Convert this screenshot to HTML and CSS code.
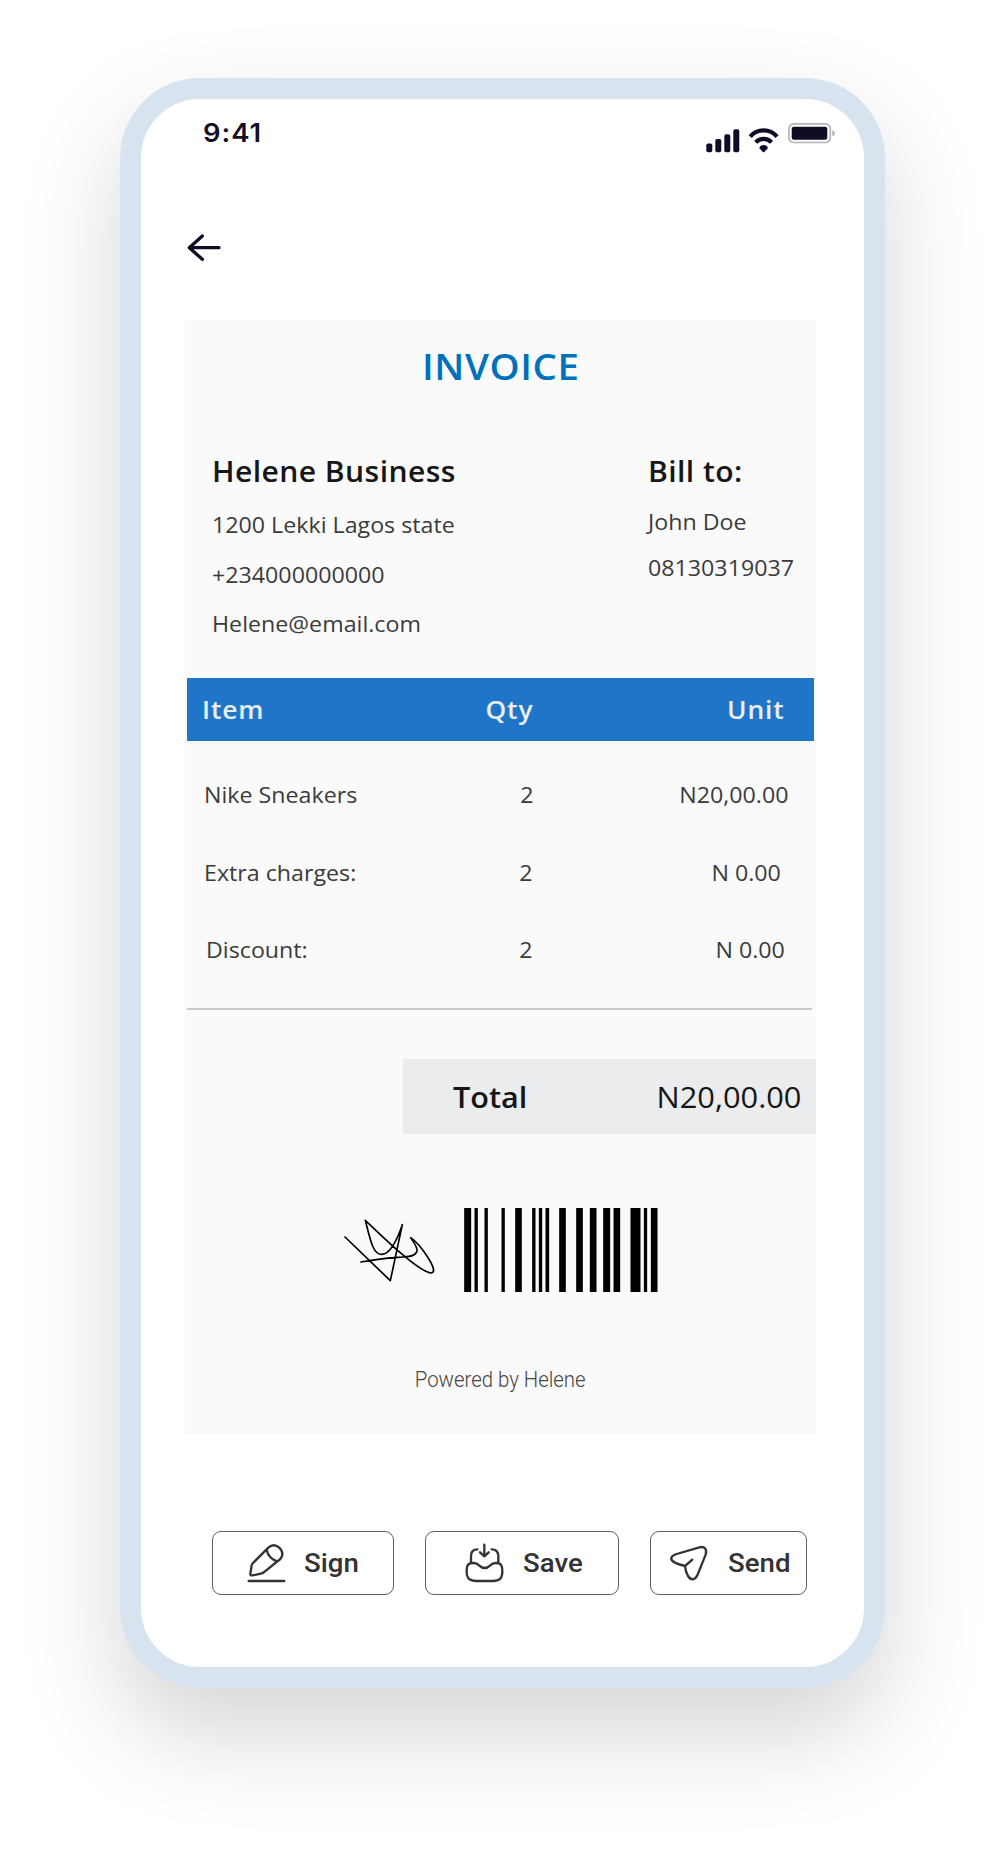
FILE: index.html
```html
<!DOCTYPE html>
<html lang="en">
<head>
<meta charset="utf-8">
<title>Invoice</title>
<link rel="stylesheet" href="styles.css">
</head>
<body>
<main class="phone">
  <header class="status">
    <span class="wide time">9:41</span>
    <div class="status-icons">
      <svg class="signal" width="34" height="24" viewBox="0 0 34 24"><rect x=".3" y="14.5" width="6" height="8.7" rx="1.8"/><rect x="9.3" y="10" width="6" height="13.2" rx="1.8"/><rect x="18.3" y="5.3" width="6" height="17.9" rx="1.8"/><rect x="27.3" y=".3" width="6" height="22.9" rx="1.8"/></svg>
      <svg class="wifi" width="32" height="25" viewBox="0 0 32 25"><path class="arc" d="M2.2 8.6A17.6 17.6 0 0 1 29 8.6M7.7 14.4A10.8 10.8 0 0 1 23.5 14.4"/><path d="M11.4 19.4C13.2 16.2 18 16.2 19.8 19.4Q20 20 19.5 20.5L16.3 23.9Q15.6 24.5 14.9 23.9L11.7 20.5Q11.2 20 11.4 19.4Z"/></svg>
      <svg class="battery" width="48" height="21" viewBox="0 0 48 21"><rect class="shell" x=".9" y=".9" width="41.4" height="18.6" rx="5"/><rect x="3.7" y="3.7" width="35.6" height="13" rx="2.2"/><path class="cap" d="M44.3 7.2Q46.8 7.8 46.8 10.2T44.3 13.2Z"/></svg>
    </div>
  </header>
  <nav class="nav">
    <svg class="back" width="34" height="30" viewBox="232 488 102 90"><path d="M328 532H239M278 497L239 532L278 567"/></svg>
  </nav>

  <section class="invoice">
    <h1 class="title"><span class="wide">INVOICE</span></h1>
    <div class="parties">
      <div class="seller">
        <h2><span class="wide">Helene Business</span></h2>
        <p><span class="wide">1200 Lekki Lagos state</span></p>
        <p><span class="wide">+234000000000</span></p>
        <p><span class="wide">Helene@email.com</span></p>
      </div>
      <div class="buyer">
        <h2><span class="wide">Bill to:</span></h2>
        <p><span class="wide">John Doe</span></p>
        <p><span class="wide">08130319037</span></p>
      </div>
    </div>
    <div class="row head"><span class="wide">Item</span><span class="wide end">Qty</span><span class="wide end">Unit</span></div>
    <div class="items">
      <div class="row product"><span class="wide">Nike Sneakers</span><span class="wide end">2</span><span class="wide end">N20,00.00</span></div>
      <div class="row charges"><span class="wide">Extra charges:</span><span class="wide end">2</span><span class="wide end">N 0.00</span></div>
      <div class="row discount"><span class="wide">Discount:</span><span class="wide end">2</span><span class="wide end">N 0.00</span></div>
    </div>
    <div class="total"><strong class="wide">Total</strong><span class="wide end">N20,00.00</span></div>
    <div class="marks">
      <svg class="signature" width="94" height="66" viewBox="40 84 282 198"><path d="M46 141L182 272L218 104C205 142 185 191 157 193C130 195 122 150 107 91C155 136 262 243 304 249C333 248 272 163 243 143C249 153 264 170 262 184C257 198 243 199 220 201C180 204 150 205 94 216"/></svg>
      <svg class="barcode" width="194" height="84" viewBox="402 55 581 252"><path d="M402 55h21v252h-21zM433 55h10v252h-10zM463 55h10v252h-10zM514 55h10v252h-10zM555 55h20v252h-20zM606 55h10v252h-10zM626 55h10v252h-10zM646 55h11v252h-11zM687 55h20v252h-20zM738 55h20v252h-20zM779 55h20v252h-20zM819 55h21v252h-21zM850 55h20v252h-20zM901 55h30v252h-30zM941 55h10v252h-10zM962 55h20v252h-20z"/></svg>
    </div>
    <footer class="powered"><span>Powered by Helene</span></footer>
  </section>

  <div class="actions">
    <button class="sign" type="button">
      <svg width="40" height="40" viewBox="170 98 120 120"><path d="M175 212H282M180 190L184 165Q185 161 188 158L234 112Q250 98 267 112Q284 129 270 146L223 184Q218 189 212 190L187 195Q179 196 180 190ZM229 117Q232 141 259 153"/></svg>
      <span class="wide">Sign</span>
    </button>
    <button class="save" type="button">
      <svg width="40" height="40" viewBox="824 98 120 120"><path d="M850 158C833 158 829 164 829 184C829 205 838 212 858 212H908C928 212 936 204 936 184C936 164 932 158 916 158C898 158 900 173 883 173C866 173 868 158 850 158ZM842 158V138Q842 117 861 117M904 117Q924 117 924 138V158M882 103V138M869 126L882 138L895 126"/></svg>
      <span class="wide">Save</span>
    </button>
    <button class="send" type="button">
      <svg width="40" height="40" viewBox="507 98 120 120"><path d="M598 111L530 131C509 138 509 149 525 157Q538 163 555 167Q557 185 564 197C573 211 585 210 592 195L617 133C622 117 614 107 598 111ZM555 167L577 148"/></svg>
      <span class="wide">Send</span>
    </button>
  </div>
</main>
</body>
</html>
```
FILE: styles.css
```css
* { box-sizing: border-box; }

body {
  margin: 0;
  padding-top: 78px;
  height: 1849px;
  background: #fff;
  font-family: "Open Sans", "Noto Sans", sans-serif;
  color: #3b3b3b;
}

h1, h2, p { margin: 0; }
svg { display: block; flex: none; }

/* Slightly extended letterforms used throughout the screen */
.wide {
  display: inline-block;
  white-space: nowrap;
  transform: scaleX(1.055);
  transform-origin: left center;
}
.wide.end { transform-origin: right center; }

.phone {
  width: 765px;
  height: 1610px;
  margin-left: 120px;
  border: 21px solid #d7e3ef;
  border-radius: 80px;
  background: #fff;
  box-shadow: 0 45px 100px rgba(0, 0, 0, .17);
}

.status {
  display: flex;
  justify-content: space-between;
  height: 66px;
  padding: 0 28.5px 0 62px;
}
.time { font: 600 26px/68px Inter, sans-serif; letter-spacing: .9px; color: #150f26; }
.status-icons { display: flex; fill: #120b26; }
.signal { margin: 30px 8px 0 0; }
.wifi { margin: 29px 8px 0 0; }
.wifi .arc { fill: none; stroke: #120b26; stroke-width: 4.2; }
.battery { margin-top: 23.5px; }
.battery .shell { fill: none; stroke: #b3b1b9; stroke-width: 1.7; }
.battery .cap { fill: #b3b1b9; }

.nav { height: 155px; padding: 68px 0 0 46px; }
.back path { fill: none; stroke: #120b26; stroke-width: 10; stroke-linecap: round; stroke-linejoin: round; }

.invoice {
  width: 631px;
  height: 1114px;
  margin-left: 44px;
  padding-top: 16px;
  background: #fafafa;
}
.title {
  height: 110px;
  padding-left: 237px;
  font-size: 36.4px;
  font-weight: 570;
  line-height: 60px;
  letter-spacing: .55px;
  color: #0071bc;
}

.parties { display: flex; height: 232px; padding-left: 27px; font-size: 22px; }
.parties h2 { font-size: 28.5px; font-weight: 600; line-height: 50px; letter-spacing: .4px; color: #161616; }
.seller { width: 435.5px; }
.seller p { line-height: 49.6px; }
.seller h2 { margin-bottom: 4px; }
.buyer h2 { margin-bottom: 2px; }
.buyer p { line-height: 46px; }

.row { display: grid; grid-template-columns: 200px 147px 1fr; justify-content: start; }
.row .end { justify-self: end; }
.head {
  width: 627px;
  height: 63px;
  margin-left: 2px;
  padding: 0 29px 0 15px;
  background: #1f76c9;
  font-size: 25px;
  font-weight: 550;
  line-height: 62px;
  letter-spacing: .8px;
  color: #e9eef5;
}
.head .end:nth-child(2) { margin-right: 16px; }

.items {
  width: 625px;
  height: 269px;
  margin-left: 2px;
  padding-top: 15px;
  border-bottom: 2px solid #c9c9cf;
  font-size: 22px;
}
.row.product, .row.charges, .row.discount { height: 77.7px; padding-left: 17px; line-height: 77.7px; }
.product .end:nth-child(2) { margin-right: 17.5px; }
.charges .end:nth-child(2), .discount .end:nth-child(2) { margin-right: 18.5px; }
.product { padding-right: 23.8px; }
.charges { padding-right: 30.8px; }
.discount { padding-right: 26.8px; }
.discount .wide:first-child { margin-left: 1.7px; }

.total {
  display: flex;
  justify-content: space-between;
  width: 413px;
  height: 75px;
  margin: 49px 0 0 218px;
  padding: 0 15px 0 50px;
  background: #ebeced;
  font-size: 29px;
  line-height: 76px;
  color: #161616;
}
.total strong { font-weight: 600; }
.total .end { transform: scaleX(1.062); }

.marks { display: flex; height: 84px; margin: 74px 0 0 158px; }
.signature { margin: 10px 27px 0 0; }
.signature path { fill: none; stroke: #000; stroke-width: 5; stroke-linecap: round; stroke-linejoin: round; }

.powered { margin-top: 61px; text-align: center; font: 300 21.5px/54px Roboto, sans-serif; color: #444; }
.powered span { display: inline-block; transform: scaleX(.947); }

.actions { display: flex; gap: 31px; margin: 97px 0 0 71px; }
.actions button {
  display: flex;
  align-items: center;
  height: 64px;
  padding: 0;
  border: 1.3px solid #5b5f66;
  border-radius: 9px;
  background: #fff;
  color: #333;
  font: 500 26.2px/62px Roboto, sans-serif;
}
.actions svg path { fill: none; stroke: #333; stroke-width: 7; stroke-linecap: round; stroke-linejoin: round; }
.actions .sign { width: 181.5px; padding-left: 33.5px; }
.actions .save { width: 194.7px; padding-left: 39px; }
.actions .send { width: 156.5px; padding-left: 17.5px; }
.actions .wide { margin-left: 17px; }
.actions .save .wide { margin-left: 18px; }
.actions .send .wide { margin-left: 19px; }
```
